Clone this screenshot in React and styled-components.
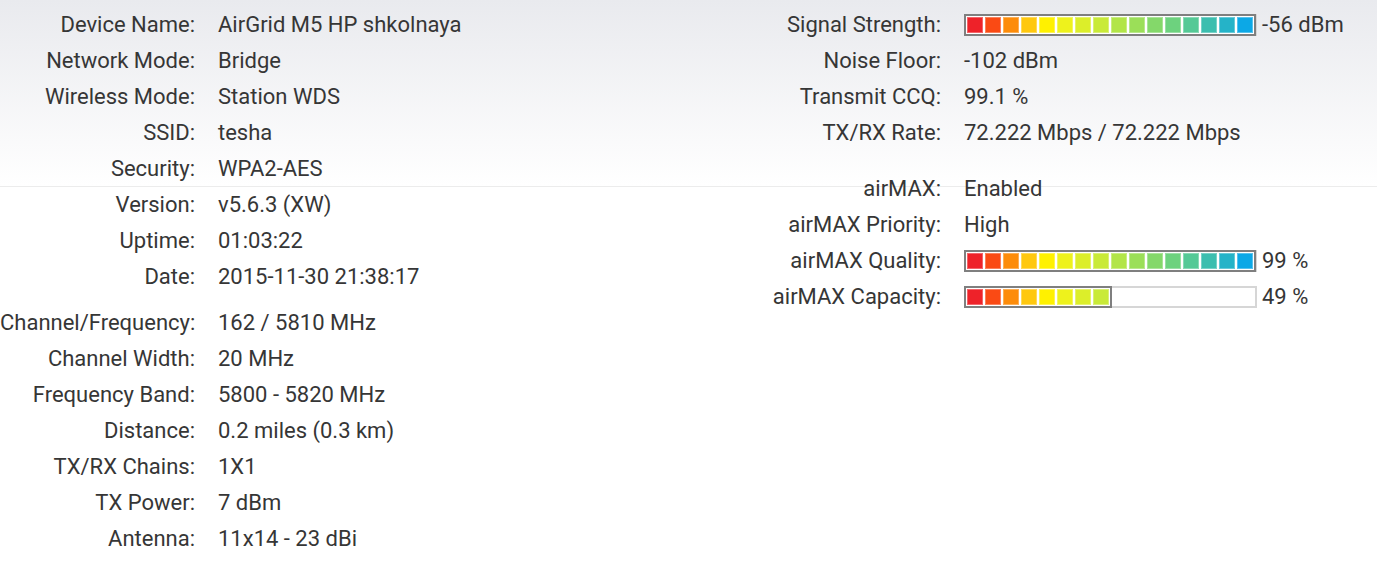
import React from "react";
import styled, { createGlobalStyle } from "styled-components";

const GlobalStyle = createGlobalStyle`
  html, body {
    margin: 0;
    padding: 0;
    background: #fff;
  }
  body {
    font-family: Roboto, "Liberation Sans", sans-serif;
    color: #363636;
  }
`;

// segment colours, red -> blue
const COLORS = [
  "#ee2229", "#fa4a14", "#fd8c0a", "#ffc80f",
  "#fff100", "#eef21c", "#dcee2a", "#c9ea38",
  "#b2e548", "#9bdf58", "#84d86a", "#6dd27e",
  "#55c996", "#3cbeaf", "#25b3c8", "#0ca8e6",
];

const leftRows = [
  ["Device Name", "AirGrid M5 HP shkolnaya"],
  ["Network Mode", "Bridge"],
  ["Wireless Mode", "Station WDS"],
  ["SSID", "tesha"],
  ["Security", "WPA2-AES"],
  ["Version", "v5.6.3 (XW)"],
  ["Uptime", "01:03:22"],
  ["Date", "2015-11-30 21:38:17"],
  null,
  ["Channel/Frequency", "162 / 5810 MHz"],
  ["Channel Width", "20 MHz"],
  ["Frequency Band", "5800 - 5820 MHz"],
  ["Distance", "0.2 miles (0.3 km)"],
  ["TX/RX Chains", "1X1"],
  ["TX Power", "7 dBm"],
  ["Antenna", "11x14 - 23 dBi"],
];

const rightRows = [
  ["Signal Strength", { bar: 16, text: "-56 dBm" }],
  ["Noise Floor", "-102 dBm"],
  ["Transmit CCQ", "99.1 %"],
  ["TX/RX Rate", "72.222 Mbps / 72.222 Mbps"],
  null,
  ["airMAX", "Enabled"],
  ["airMAX Priority", "High"],
  ["airMAX Quality", { bar: 16, text: "99 %" }],
  ["airMAX Capacity", { bar: 8, text: "49 %" }],
];

function Meter({ count, text }) {
  return (
    <MeterRow>
      <Track>
        <Fill>
          {COLORS.slice(0, count).map((c) => (
            <Segment key={c} $color={c} />
          ))}
        </Fill>
      </Track>
      <MeterText>{text}</MeterText>
    </MeterRow>
  );
}

function InfoTable({ rows, gap }) {
  return (
    <Table>
      {rows.map((row, i) =>
        row === null ? (
          <Spacer key={i} $h={gap} />
        ) : (
          <Row key={i}>
            <Label>{row[0]}:</Label>
            <Value>
              {typeof row[1] === "string" ? (
                row[1]
              ) : (
                <Meter count={row[1].bar} text={row[1].text} />
              )}
            </Value>
          </Row>
        )
      )}
    </Table>
  );
}

export default function App() {
  return (
    <Page>
      <GlobalStyle />
      <LeftPanel>
        <InfoTable rows={leftRows} gap={10} />
      </LeftPanel>
      <RightPanel>
        <InfoTable rows={rightRows} gap={20} />
      </RightPanel>
    </Page>
  );
}

const Page = styled.div`
  display: flex;
  width: 1377px;
  min-height: 566px;
  padding-top: 7px;
  box-sizing: border-box;
  background:
    linear-gradient(to bottom, transparent 186px, #ececec 186px, #ececec 187px, transparent 187px),
    linear-gradient(to bottom, #e9eaee 0px, #ffffff 186px, #ffffff 100%);
`;

const LeftPanel = styled.div`
  width: 746px;
`;

const RightPanel = styled.div`
  flex: 1;
`;

const Table = styled.div`
  display: flex;
  flex-direction: column;
`;

const Row = styled.div`
  display: grid;
  grid-template-columns: 195px 1fr;
  column-gap: 23px;
  height: 36px;
  line-height: 36px;
  font-size: 22px;
  white-space: nowrap;
`;

const Spacer = styled.div`
  height: ${(p) => p.$h}px;
`;

const Label = styled.div`
  text-align: right;
`;

const Value = styled.div`
  display: flex;
  align-items: center;
`;

const MeterRow = styled.div`
  display: flex;
  align-items: center;
  margin-bottom: 2px;
`;

const Track = styled.div`
  display: flex;
  width: 289px;
  height: 18px;
  border: 2px solid #d6d6d6;
  background: #fff;
`;

const Fill = styled.div`
  display: flex;
  margin: -2px;
  height: 18px;
  border: 2px solid #7f7f7f;
  background: #fff;
`;

const Segment = styled.div`
  width: 16px;
  height: 16px;
  margin: 1px;
  background: ${(p) => p.$color};
  box-shadow: inset 0 0 0 1px rgba(255, 255, 255, 0.3);
`;

const MeterText = styled.span`
  margin-left: 5px;
`;
